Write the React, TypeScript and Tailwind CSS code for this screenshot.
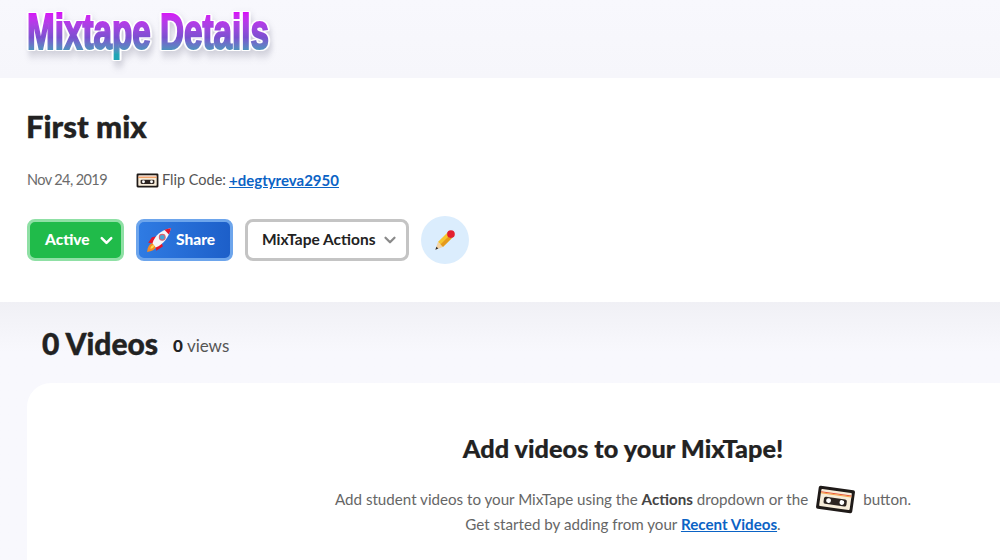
import { ChevronDown } from "lucide-react";

function Cassette({ className }: { className?: string }) {
    return (
        <svg viewBox="0 0 40 26" className={className}>
            <path d="M3 1h34a2 2 0 0 1 2 2v20a2 2 0 0 1-2 2H3a2 2 0 0 1-2-2V3a2 2 0 0 1 2-2z" fill="#1f1a18" />
            <rect x="4" y="4" width="32" height="18" rx="1" fill="#f7ecd9" />
            <rect x="4" y="6.500" width="32" height="1.200" fill="#e8553a" />
            <rect x="4" y="7.700" width="32" height="1" fill="#f5a54a" />
            <rect x="8" y="11.500" width="24" height="7.500" rx="2" fill="#2b2320" />
            <circle cx="13" cy="15.200" r="2.500" fill="#fff" />
            <circle cx="27" cy="15.200" r="2.500" fill="#fff" />
        </svg>
    );
}

function Rocket({ className }: { className?: string }) {
    return (
        <svg viewBox="0 0 24 24" className={className}>
            <path d="M1 23c.4-4.600 2-7.400 5-8.500l3.500 3.500C8.400 21 5.600 22.600 1 23z" fill="#f58a25" />
            <path d="M4 20c.3-1.700 1.100-2.900 2.800-3.400l.8.800C7 19.200 5.800 20 4 20z" fill="#fde047" />
            <path d="M5.500 9.500 10 8.500 7 15l-5-.5z" fill="#e3142c" />
            <path d="M15.500 18 14.500 14 9 17l.5 5z" fill="#e3142c" />
            <path d="M6 15C8 8 14 3 23 1c-2 9-7 15-14 18z" fill="#f4f6f8" />
            <path d="M17 2.500 23 1c-.4 2.200-1.100 4.300-1.900 6z" fill="#e3142c" />
            <circle cx="15" cy="9.500" r="2.700" fill="#45a6d6" stroke="#d9626e" strokeWidth="1" />
        </svg>
    );
}

function Pencil({ className }: { className?: string }) {
    return (
        <svg viewBox="0 0 24 24" className={className}>
            <path d="M4.300 14.300 15.300 3.300l5.400 5.400-11 11z" fill="#f7c52d" />
            <path d="M7 17 18 6l2.700 2.700-11 11z" fill="#e59a1c" />
            <path d="M4.300 14.300l5.400 5.400L1.500 22.500z" fill="#f3d3a4" />
            <path d="M1.500 22.500l1.100-3.200 2.100 2.100z" fill="#2a2a2a" />
            <path d="m14 4.600 5.400 5.400 1.800-1.800-5.400-5.400z" fill="#b5bcc4" />
            <circle cx="18.500" cy="5.500" r="4.200" fill="#e3202e" />
        </svg>
    );
}

export default function App() {
    return (
        <div className="h-[560px] w-[1000px] overflow-hidden bg-[#f8f8fd] font-['Lato','Noto_Sans',sans-serif] text-[#222]">
            <header className="flex h-[78px] items-start bg-gradient-to-b from-[#f8f8fd] to-[#f6f6fb] pl-[27px] pt-[4px]">
                <h1 className="origin-left scale-x-[0.665] whitespace-nowrap bg-gradient-to-b from-[#d90cf8] from-15% via-[#7a50d0] via-60% to-[#1fa5b5] to-90% bg-clip-text font-['Liberation_Sans',sans-serif] text-[50px] leading-[56px] font-bold text-transparent [-webkit-text-stroke:2px_transparent] [filter:drop-shadow(2px_0_0_#fff)_drop-shadow(-2px_0_0_#fff)_drop-shadow(0_1px_0_#fff)_drop-shadow(0_-1px_0_#fff)_drop-shadow(3px_5px_4px_rgba(60,60,90,0.22))]">
                    Mixtape Details
                </h1>
            </header>

            <section className="flex h-[224px] flex-col bg-white pl-[27px]">
                <h2 className="mt-[28px] -ml-[1px] text-[31px] leading-[40px] font-black text-[#222] [-webkit-text-stroke:0.4px_#222]">First mix</h2>
                <div className="mt-[23px] flex h-[22px] items-center text-[14.5px] text-[#555]">
                    <span className="w-[109px] text-[14.5px] tracking-[-0.6px] text-[#6b6b6b]">Nov 24, 2019</span>
                    <Cassette className="mr-[3px] h-[15px] w-[23px]" />
                    <span>Flip Code:</span>
                    <a className="ml-[3px] text-[15px] font-bold text-[#0b63c5] underline">+degtyreva2950</a>
                </div>
                <div className="mt-[25px] flex items-center">
                    <button className="flex h-[42px] w-[97px] items-center justify-start gap-[7px] rounded-[8px] border-[3px] border-[#8fe0a5] bg-[#20bb4a] pl-[15px] text-[15.5px] font-black text-white">
                        Active
                        <ChevronDown size={19} strokeWidth={3.2} />
                    </button>
                    <button className="ml-[12px] flex h-[42px] w-[97px] items-center justify-start gap-[4px] rounded-[8px] border-[3px] border-[#6da5ec] bg-gradient-to-r from-[#2f7be3] to-[#1d5fc9] pl-[7px] text-[15.5px] font-black text-white">
                        <Rocket className="h-[26px] w-[26px]" />
                        Share
                    </button>
                    <button className="ml-[12px] flex h-[42px] w-[164px] items-center justify-start gap-[6px] rounded-[8px] border-[3px] border-[#c4c4c4] bg-white pl-[14px] text-[15.5px] font-bold text-[#222]">
                        MixTape Actions
                        <ChevronDown size={18} strokeWidth={3} className="text-[#8a8a8a]" />
                    </button>
                    <button className="ml-[12px] flex h-[48px] w-[48px] items-center justify-center rounded-full bg-[#dbedfd]">
                        <Pencil className="h-[22px] w-[22px]" />
                    </button>
                </div>
            </section>

            <section className="h-[258px] bg-gradient-to-b from-[#f0f0f5] to-[#f8f8fd] to-[50px] pl-[27px]">
                <div className="flex h-[81px] items-center pb-[22px] pl-[15px] pt-[23px]">
                    <span className="text-[30px] leading-[38px] font-black text-[#222] [-webkit-text-stroke:0.4px_#222]">0 Videos</span>
                    <span className="ml-[15px] mt-[5px] text-[17px] text-[#555]">
                        <b className="font-black text-[#222]">0</b> views
                    </span>
                </div>
                <div className="h-[200px] rounded-tl-[24px] bg-white pl-[219px] pt-[49px] text-center">
                    <h3 className="text-[25.3px] leading-[32px] font-black text-[#222] [-webkit-text-stroke:0.2px_#222]">Add videos to your MixTape!</h3>
                    <div className="mt-[22px] flex h-[26px] items-center justify-center text-[15.15px] text-[#666]">
                        <span>
                            Add student videos to your MixTape using the <b className="font-bold text-[#444]">Actions</b> dropdown or the
                        </span>
                        <Cassette className="mx-[8px] h-[25px] w-[39px] rotate-[8deg]" />
                        <span>button.</span>
                    </div>
                    <p className="text-[15.15px] leading-[24px] text-[#666]">
                        Get started by adding from your <a className="font-bold text-[#0b63c5] underline">Recent Videos</a>.
                    </p>
                </div>
            </section>
        </div>
    );
}
